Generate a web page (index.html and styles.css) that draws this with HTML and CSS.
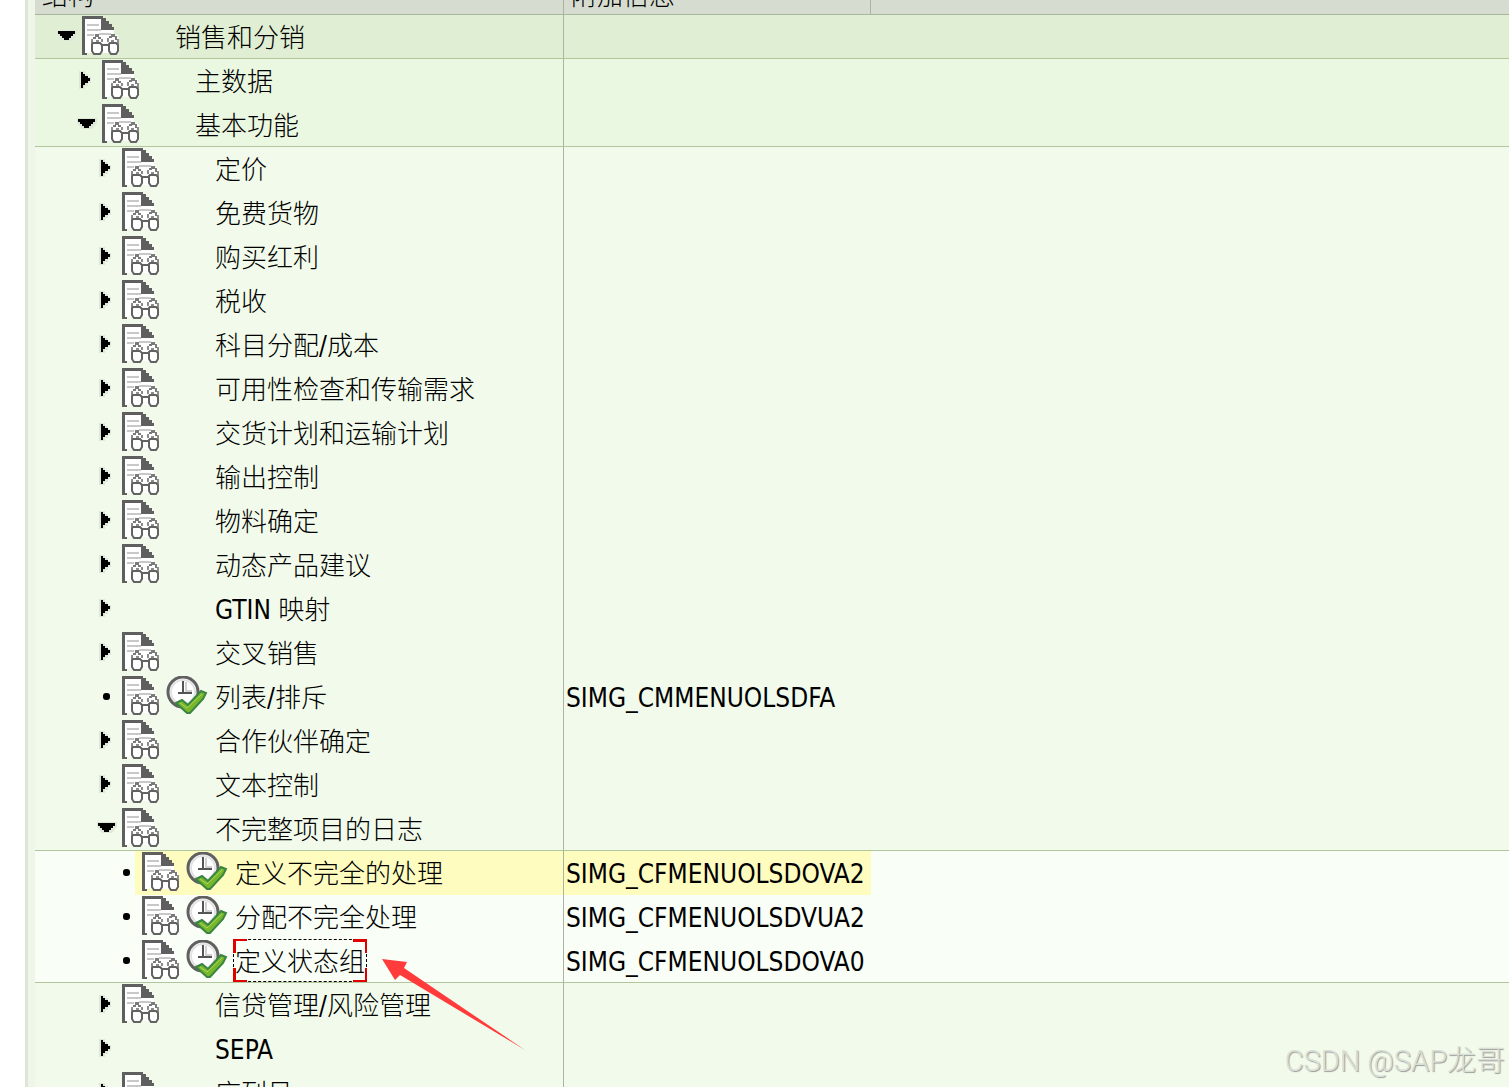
FILE: index.html
```html
<!DOCTYPE html>
<html lang="zh-CN">
<head>
  <meta charset="UTF-8">
  <meta name="viewport" content="width=device-width, initial-scale=1.0">
  <title>销售和分销</title>
  <link rel="stylesheet" href="styles.css">
</head>
<body>
  <!-- Shared icons -->
  <svg class="sprite" aria-hidden="true">
    <symbol id="doc" viewBox="0 0 38 39">
      <path fill="#fff" d="M3 3h16v10h13v6h3l2 4v14H5V37H3z"/>
      <path fill="#c8c8c8" d="M5 8h12v2H5zM5 13h14v2H5zM5 18h7v2H5zM17 17h12v2H17z"/>
      <path fill="#5f5f5f" d="M0 0h21v2h3v3h3v3h3v3h2v3H19V3H3v34h2v2H0z"/>
      <path fill="#7a7a7a" d="M13 18h4v3h-4zM11 21h3v2h-3zM16 21h3v2h-3zM29 18h4v3h-4zM27 20h3v2h-3zM33 20h2v4h-2z"/>
      <path fill="#8c8c8c" d="M9 23h2v4H9zM19 23h2v3h-2zM25 22h2v4h-2zM35 23h2v5h-2zM14 24h3v2h-3zM29 24h3v2h-3z"/>
      <path fill="none" stroke="#626262" stroke-width="2" d="M11 27h7l2 2v6l-2 3h-6l-2-3v-7zM28 27h6l2 2v6l-2 3h-5l-2-3v-7zM20 29h7"/>
    </symbol>
    <symbol id="exec" viewBox="0 0 42 39">
      <circle cx="17" cy="16" r="15" fill="#fff" stroke="#606060" stroke-width="3"/>
      <circle cx="17" cy="16" r="12" fill="none" stroke="#e2e2e2" stroke-width="2"/>
      <path fill="none" stroke="#d0d0d0" stroke-width="2" d="M20 6v9h6"/>
      <path fill="none" stroke="#555" stroke-width="2" d="M17 5v12M12 17h14"/>
      <path fill="#76b82a" stroke="#3b8443" stroke-width="2" d="M10 27l6-3 6 5L35 15l5 2-3 6-13 14h-3z"/>
      <path fill="none" stroke="#a8d65c" stroke-width="1" d="M14 27l7 5 15-14"/>
    </symbol>
    <symbol id="right" viewBox="0 0 20 20">
      <path fill="#dfe8d8" d="M2 1h6v3h3v3h3v6h-3v3H8v3H2z"/>
      <path d="M4 2h2v2h2v2h3v2h2v3h-2v2H8v2H6v3H4z"/>
    </symbol>
    <symbol id="down" viewBox="0 0 20 20">
      <path fill="#dfe8d8" d="M0 4h20v5l-5 6H5L0 9z"/>
      <path d="M1 5h17v3h-2v2h-2v2h-2v2H7v-2H5v-2H3V8H1z"/>
    </symbol>
  </svg>

  <main class="pane">
    <table class="tree">
      <colgroup>
        <col class="col-name">
        <col class="col-info">
        <col>
      </colgroup>
      <thead>
        <tr>
          <th><div>结构</div></th>
          <th><div>附加信息</div></th>
          <th></th>
        </tr>
      </thead>
      <tbody>
        <tr class="level-0 last">
          <td><div class="item"><button class="toggle" aria-label="折叠"><svg><use href="#down"/></svg></button><div class="node"><span class="slot"><svg><use href="#doc"/></svg></span><span class="slot"></span><span class="label">销售和分销</span></div></div></td>
          <td></td><td></td>
        </tr>
        <tr class="level-1">
          <td><div class="item"><button class="toggle" aria-label="展开"><svg><use href="#right"/></svg></button><div class="node"><span class="slot"><svg><use href="#doc"/></svg></span><span class="slot"></span><span class="label">主数据</span></div></div></td>
          <td></td><td></td>
        </tr>
        <tr class="level-1 last">
          <td><div class="item"><button class="toggle" aria-label="折叠"><svg><use href="#down"/></svg></button><div class="node"><span class="slot"><svg><use href="#doc"/></svg></span><span class="slot"></span><span class="label">基本功能</span></div></div></td>
          <td></td><td></td>
        </tr>
        <tr class="level-2">
          <td><div class="item"><button class="toggle" aria-label="展开"><svg><use href="#right"/></svg></button><div class="node"><span class="slot"><svg><use href="#doc"/></svg></span><span class="slot"></span><span class="label">定价</span></div></div></td>
          <td></td><td></td>
        </tr>
        <tr class="level-2">
          <td><div class="item"><button class="toggle" aria-label="展开"><svg><use href="#right"/></svg></button><div class="node"><span class="slot"><svg><use href="#doc"/></svg></span><span class="slot"></span><span class="label">免费货物</span></div></div></td>
          <td></td><td></td>
        </tr>
        <tr class="level-2">
          <td><div class="item"><button class="toggle" aria-label="展开"><svg><use href="#right"/></svg></button><div class="node"><span class="slot"><svg><use href="#doc"/></svg></span><span class="slot"></span><span class="label">购买红利</span></div></div></td>
          <td></td><td></td>
        </tr>
        <tr class="level-2">
          <td><div class="item"><button class="toggle" aria-label="展开"><svg><use href="#right"/></svg></button><div class="node"><span class="slot"><svg><use href="#doc"/></svg></span><span class="slot"></span><span class="label">税收</span></div></div></td>
          <td></td><td></td>
        </tr>
        <tr class="level-2">
          <td><div class="item"><button class="toggle" aria-label="展开"><svg><use href="#right"/></svg></button><div class="node"><span class="slot"><svg><use href="#doc"/></svg></span><span class="slot"></span><span class="label">科目分配/成本</span></div></div></td>
          <td></td><td></td>
        </tr>
        <tr class="level-2">
          <td><div class="item"><button class="toggle" aria-label="展开"><svg><use href="#right"/></svg></button><div class="node"><span class="slot"><svg><use href="#doc"/></svg></span><span class="slot"></span><span class="label">可用性检查和传输需求</span></div></div></td>
          <td></td><td></td>
        </tr>
        <tr class="level-2">
          <td><div class="item"><button class="toggle" aria-label="展开"><svg><use href="#right"/></svg></button><div class="node"><span class="slot"><svg><use href="#doc"/></svg></span><span class="slot"></span><span class="label">交货计划和运输计划</span></div></div></td>
          <td></td><td></td>
        </tr>
        <tr class="level-2">
          <td><div class="item"><button class="toggle" aria-label="展开"><svg><use href="#right"/></svg></button><div class="node"><span class="slot"><svg><use href="#doc"/></svg></span><span class="slot"></span><span class="label">输出控制</span></div></div></td>
          <td></td><td></td>
        </tr>
        <tr class="level-2">
          <td><div class="item"><button class="toggle" aria-label="展开"><svg><use href="#right"/></svg></button><div class="node"><span class="slot"><svg><use href="#doc"/></svg></span><span class="slot"></span><span class="label">物料确定</span></div></div></td>
          <td></td><td></td>
        </tr>
        <tr class="level-2">
          <td><div class="item"><button class="toggle" aria-label="展开"><svg><use href="#right"/></svg></button><div class="node"><span class="slot"><svg><use href="#doc"/></svg></span><span class="slot"></span><span class="label">动态产品建议</span></div></div></td>
          <td></td><td></td>
        </tr>
        <tr class="level-2">
          <td><div class="item"><button class="toggle" aria-label="展开"><svg><use href="#right"/></svg></button><div class="node"><span class="slot"></span><span class="slot"></span><span class="label">GTIN 映射</span></div></div></td>
          <td></td><td></td>
        </tr>
        <tr class="level-2">
          <td><div class="item"><button class="toggle" aria-label="展开"><svg><use href="#right"/></svg></button><div class="node"><span class="slot"><svg><use href="#doc"/></svg></span><span class="slot"></span><span class="label">交叉销售</span></div></div></td>
          <td></td><td></td>
        </tr>
        <tr class="level-2">
          <td><div class="item"><span class="toggle leaf"></span><div class="node"><span class="slot"><svg><use href="#doc"/></svg></span><span class="slot exec"><svg><use href="#exec"/></svg></span><span class="label">列表/排斥</span></div></div></td>
          <td>SIMG_CMMENUOLSDFA</td><td></td>
        </tr>
        <tr class="level-2">
          <td><div class="item"><button class="toggle" aria-label="展开"><svg><use href="#right"/></svg></button><div class="node"><span class="slot"><svg><use href="#doc"/></svg></span><span class="slot"></span><span class="label">合作伙伴确定</span></div></div></td>
          <td></td><td></td>
        </tr>
        <tr class="level-2">
          <td><div class="item"><button class="toggle" aria-label="展开"><svg><use href="#right"/></svg></button><div class="node"><span class="slot"><svg><use href="#doc"/></svg></span><span class="slot"></span><span class="label">文本控制</span></div></div></td>
          <td></td><td></td>
        </tr>
        <tr class="level-2 last">
          <td><div class="item"><button class="toggle" aria-label="折叠"><svg><use href="#down"/></svg></button><div class="node"><span class="slot"><svg><use href="#doc"/></svg></span><span class="slot"></span><span class="label">不完整项目的日志</span></div></div></td>
          <td></td><td></td>
        </tr>
        <tr class="level-3 selected">
          <td><div class="item"><span class="toggle leaf"></span><div class="node"><span class="slot"><svg><use href="#doc"/></svg></span><span class="slot exec"><svg><use href="#exec"/></svg></span><span class="label">定义不完全的处理</span></div></div></td>
          <td>SIMG_CFMENUOLSDOVA2</td><td></td>
        </tr>
        <tr class="level-3">
          <td><div class="item"><span class="toggle leaf"></span><div class="node"><span class="slot"><svg><use href="#doc"/></svg></span><span class="slot exec"><svg><use href="#exec"/></svg></span><span class="label">分配不完全处理</span></div></div></td>
          <td>SIMG_CFMENUOLSDVUA2</td><td></td>
        </tr>
        <tr class="level-3 last">
          <td><div class="item"><span class="toggle leaf"></span><div class="node"><span class="slot"><svg><use href="#doc"/></svg></span><span class="slot exec"><svg><use href="#exec"/></svg></span><span class="label focused">定义状态组<svg class="pointer" viewBox="0 0 144 92"><path fill="#ff3b3b" d="M0 0l25 3-3 6 121 82L18 16l-5 5z"/></svg></span></div></div></td>
          <td>SIMG_CFMENUOLSDOVA0</td><td></td>
        </tr>
        <tr class="level-2">
          <td><div class="item"><button class="toggle" aria-label="展开"><svg><use href="#right"/></svg></button><div class="node"><span class="slot"><svg><use href="#doc"/></svg></span><span class="slot"></span><span class="label">信贷管理/风险管理</span></div></div></td>
          <td></td><td></td>
        </tr>
        <tr class="level-2">
          <td><div class="item"><button class="toggle" aria-label="展开"><svg><use href="#right"/></svg></button><div class="node"><span class="slot"></span><span class="slot"></span><span class="label">SEPA</span></div></div></td>
          <td></td><td></td>
        </tr>
        <tr class="level-2">
          <td><div class="item"><button class="toggle" aria-label="展开"><svg><use href="#right"/></svg></button><div class="node"><span class="slot"><svg><use href="#doc"/></svg></span><span class="slot"></span><span class="label">序列号</span></div></div></td>
          <td></td><td></td>
        </tr>
      </tbody>
    </table>
  </main>
  <div class="watermark">CSDN @SAP龙哥</div>
</body>
</html>
```
FILE: styles.css
```css
* {
  box-sizing: border-box;
}
body {
  margin: 0;
  height: 100vh;
  overflow: hidden;
  background: #fff;
  color: #000;
  font-family: "DejaVu Sans Condensed", "Noto Sans CJK SC", sans-serif;
  font-size: 26px;
  line-height: 36px;
}
.sprite {
  display: none;
}
.pane {
  height: 100vh;
  overflow: hidden;
  margin-left: 25px;
  padding-left: 7px;
  border-left: 3px solid #dbe6d6;
  background: #eff5e9;
}
.tree {
  width: 100%;
  table-layout: fixed;
  border-collapse: separate;
  border-spacing: 0;
}
.col-name {
  width: 529px;
}
.col-info {
  width: 307px;
}

/* Header, scrolled partly out of view */
th {
  height: 15px;
  padding: 0 0 0 7px;
  border-right: 1px solid #a9b5a0;
  border-bottom: 1px solid #a9b5a0;
  background: #d6dcd0;
  font-weight: 300;
  text-align: left;
}
th:last-child {
  border-right: 0;
}
th div {
  display: flex;
  align-items: flex-end;
  height: 14px;
  overflow: hidden;
}

/* Rows */
td {
  height: 44px;
  padding: 5px 0 0 2px;
  vertical-align: top;
  white-space: nowrap;
}
td:first-child {
  padding: 0;
  border-right: 1px solid #a9b5a0;
}
.last td {
  border-bottom: 1px solid #b2c69b;
}
.level-0 {
  background: #e0eed3;
}
.level-1 {
  background: #eaf7e1;
}
.level-2 {
  background: #f2fbeb;
}
.level-3 {
  background: #f9fff6;
}
.item {
  display: flex;
  height: 43px;
  padding-left: 20px;
  font-weight: 300;
}
.level-1 .item {
  padding-left: 40px;
}
.level-2 .item {
  padding-left: 60px;
}
.level-3 .item {
  padding-left: 80px;
}
.selected .node,
.selected td:nth-child(2) {
  background: #fffcc0;
}
.selected .item {
  height: 44px;
}

.toggle {
  flex: none;
  width: 20px;
  height: 42px;
  padding: 0 0 0 2px;
  border: 0;
  background: none;
}
.toggle svg {
  display: block;
  width: 20px;
  height: 20px;
}
.leaf {
  display: flex;
  align-items: center;
  justify-content: center;
}
.leaf::before {
  content: "";
  width: 7px;
  height: 7px;
  border-radius: 3px;
  background: #000;
}
.node {
  display: flex;
  flex: 1;
  padding-left: 7px;
}
.slot {
  flex: none;
  width: 44px;
  padding-top: 1px;
}
.slot svg {
  display: block;
  width: 38px;
  height: 39px;
}
.exec svg {
  width: 42px;
}
.label {
  margin-left: 3px;
  padding: 5px 2px 2px;
}

/* Keyboard focus frame with red corners */
.focused {
  position: relative;
}
.focused::before {
  content: "";
  position: absolute;
  inset: 0;
  border: 1px dashed #000;
}
.focused::after {
  content: "";
  position: absolute;
  inset: 0;
  background:
    linear-gradient(#e00000, #e00000) 0 0 / 14px 2px,
    linear-gradient(#e00000, #e00000) 0 0 / 3px 14px,
    linear-gradient(#e00000, #e00000) 100% 0 / 14px 3px,
    linear-gradient(#e00000, #e00000) 100% 0 / 2px 14px,
    linear-gradient(#e00000, #e00000) 0 100% / 14px 2px,
    linear-gradient(#e00000, #e00000) 0 100% / 3px 14px,
    linear-gradient(#e00000, #e00000) 100% 100% / 14px 2px,
    linear-gradient(#e00000, #e00000) 100% 100% / 2px 14px;
  background-repeat: no-repeat;
}
.pointer {
  position: absolute;
  z-index: 1;
  top: 20px;
  left: 149px;
  width: 144px;
  height: 92px;
}

.watermark {
  position: absolute;
  right: 4px;
  bottom: 8px;
  color: #d9dfd5;
  font-family: Roboto, "Noto Sans CJK SC", sans-serif;
  font-size: 29px;
  font-weight: 300;
  text-shadow: 1px 1px 1px #999;
}
```
